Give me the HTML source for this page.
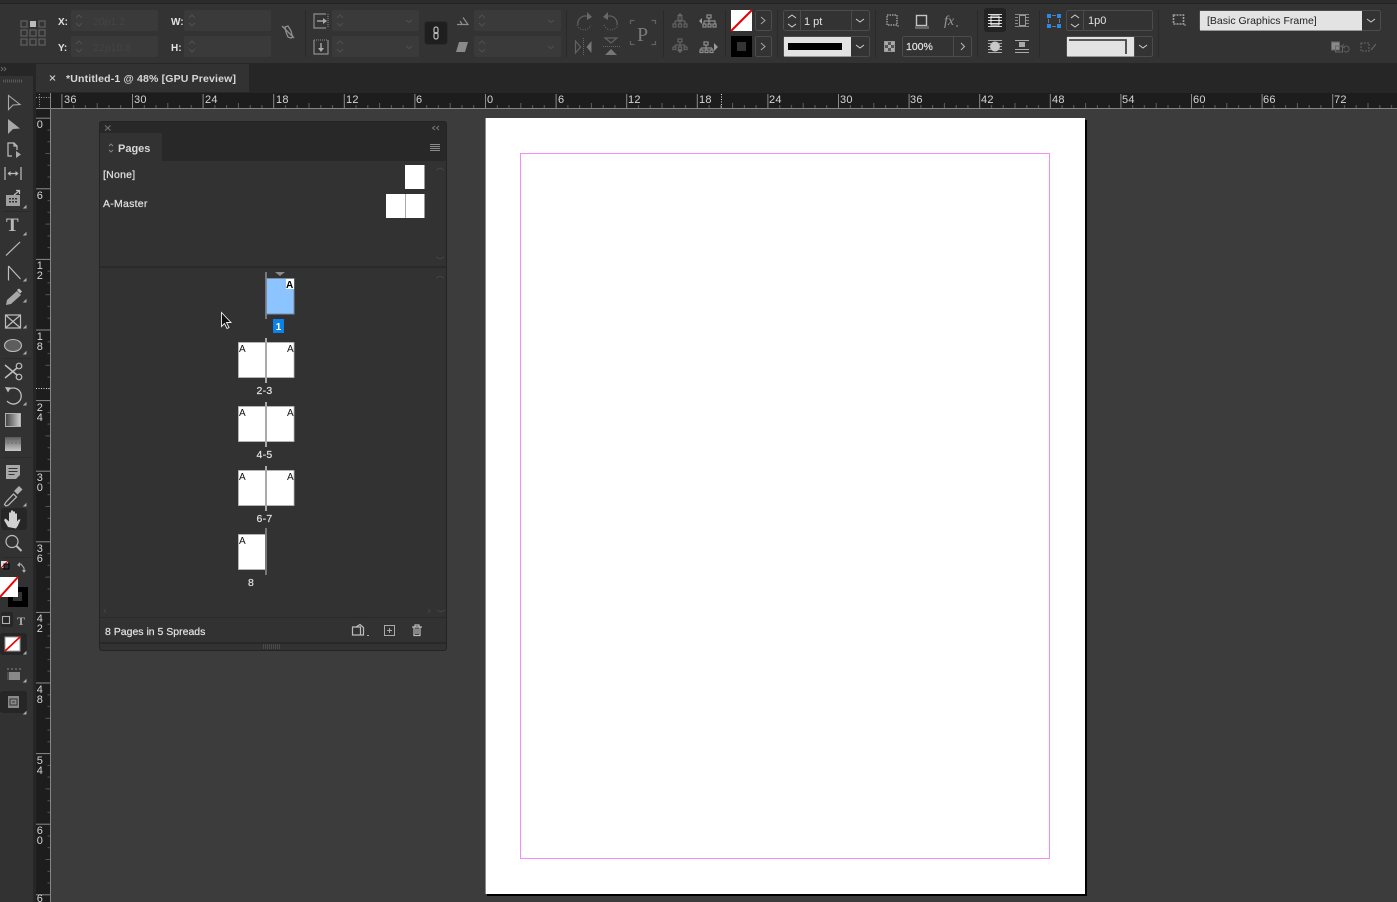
<!DOCTYPE html>
<html><head><meta charset="utf-8"><title>InDesign</title>
<style>
html,body{margin:0;padding:0;background:#3c3c3c;width:1397px;height:902px;overflow:hidden}
svg{position:absolute;left:0;top:0;display:block}
text{font-family:"Liberation Sans",sans-serif;font-size:10.5px;fill:#e2e2e2}
.r text,.r{font-size:11px;fill:#d4d4d4;letter-spacing:.3px}
.i{fill:none;stroke:#8e8e8e;stroke-width:1.2}
.d{fill:none;stroke:#626262;stroke-width:1.2}
.t{fill:none;stroke:#bdbdbd;stroke-width:1.2}
.f{fill:#3c3c3c}
.b{fill:#333;stroke:#4c4c4c}
.sep{stroke:#2a2a2a}
.lb{stroke:#e2e2e2;stroke-width:.2px;letter-spacing:.25px}
</style></head><body>
<svg width="1397" height="902" viewBox="0 0 1397 902" xmlns="http://www.w3.org/2000/svg">
<defs>
<pattern id="hr" patternUnits="userSpaceOnUse" x="485" y="93" width="70.6" height="16">
<path d="M.5 1V15" stroke="#8a8a8a"/>
<path d="M12.3 12V15M24 12V15M47.6 12V15M59.3 12V15M35.8 10V15" stroke="#5e5e5e"/>
</pattern>
<pattern id="vr" patternUnits="userSpaceOnUse" x="36" y="117.7" width="14" height="70.6">
<path d="M0 .5H14" stroke="#8a8a8a"/>
<path d="M11.500 12.3H14M11.500 24H14M11.500 47.6H14M11.500 59.3H14M9.500 35.8H14" stroke="#555"/>
</pattern>
<linearGradient id="gr" x1="1" x2="0"><stop offset="0" stop-color="#d0d0d0"/><stop offset="1" stop-color="#404040"/></linearGradient>
<linearGradient id="gv" x1="0" x2="0" y1="0" y2="1"><stop offset="0" stop-color="#5a5a5a"/><stop offset="1" stop-color="#c8c8c8"/></linearGradient>
</defs>

<!-- base areas -->
<rect width="1397" height="902" fill="#3c3c3c"/>
<rect width="1397" height="3" fill="#2c2c2c"/>
<rect y="3" width="1397" height="1" fill="#232323"/>
<rect y="4" width="1397" height="59" fill="#333"/>
<rect y="63" width="1397" height="30" fill="#262626"/>
<rect x="35" y="64" width="214" height="28" fill="#323232"/>
<text x="66" y="82" style="font-size:10.5px;font-weight:bold;fill:#d8d8d8;letter-spacing:.17px">*Untitled-1 @ 48% [GPU Preview]</text>
<path d="M50 75.500l5 5M55 75.500l-5 5" stroke="#d0d0d0" stroke-width="1.100"/>

<!-- horizontal ruler -->
<rect x="36" y="93" width="1361" height="15" fill="#1d1d1d"/>
<rect x="50.500" y="93" width="1347" height="16" fill="url(#hr)"/>
<rect x="36" y="108" width="1361" height="1" fill="#858585"/>
<g class="r">
<text x="64" y="103">36</text><text x="134" y="103">30</text><text x="205" y="103">24</text><text x="276" y="103">18</text><text x="346" y="103">12</text><text x="416" y="103">6</text><text x="487" y="103">0</text><text x="558" y="103">6</text><text x="628" y="103">12</text><text x="699" y="103">18</text><text x="769" y="103">24</text><text x="840" y="103">30</text><text x="910" y="103">36</text><text x="981" y="103">42</text><text x="1052" y="103">48</text><text x="1122" y="103">54</text><text x="1193" y="103">60</text><text x="1263" y="103">66</text><text x="1334" y="103">72</text>
</g>
<path d="M721.500 94V108" stroke="#ddd" stroke-dasharray="1 1.500"/>

<!-- vertical ruler -->
<rect x="36" y="109" width="14" height="793" fill="#1d1d1d"/>
<rect x="36" y="109" width="14" height="793" fill="url(#vr)"/>
<rect x="50" y="93" width="1" height="809" fill="#858585"/>
<path d="M36 97.500H50M39.500 94V107" stroke="#9a9a9a" stroke-dasharray="1 1.500"/>
<path d="M36 388.500H50" stroke="#ddd" stroke-dasharray="1 1.500"/>
<g class="r" text-anchor="middle">
<text x="40" y="128">0</text><text x="40" y="199">6</text>
<text x="40" y="269">1</text><text x="40" y="279">2</text>
<text x="40" y="340">1</text><text x="40" y="350">8</text>
<text x="40" y="411">2</text><text x="40" y="421">4</text>
<text x="40" y="481">3</text><text x="40" y="491">0</text>
<text x="40" y="552">3</text><text x="40" y="562">6</text>
<text x="40" y="622">4</text><text x="40" y="632">2</text>
<text x="40" y="693">4</text><text x="40" y="703">8</text>
<text x="40" y="764">5</text><text x="40" y="774">4</text>
<text x="40" y="834">6</text><text x="40" y="844">0</text>
<text x="40" y="902">6</text>
</g>

<!-- document page -->
<rect x="487" y="120" width="600" height="776" fill="#000"/>
<rect x="485" y="118" width="600" height="776" fill="#fff"/>
<rect x="485" y="118" width="1" height="776" fill="#8a8a8a"/>
<rect x="520.500" y="153.500" width="529" height="705" fill="none" stroke="#f58cf5"/>

<!-- tools panel -->
<rect x="0" y="63" width="33" height="839" fill="#323232"/>
<rect x="33" y="63" width="3" height="839" fill="#262626"/>
<rect x="0" y="63" width="33" height="13" fill="#262626"/>
<path d="M1 67l2 2-2 2M4 67l2 2-2 2" fill="none" stroke="#777" stroke-width=".8"/>
<path d="M3 81H22" stroke="#5a5a5a" stroke-width="3" stroke-dasharray="1 1"/>
<path d="M3 211.500H31M3 358.500H31M3 457.500H31M3 557.500H31" stroke="#2a2a2a"/>
<!-- selection -->
<path d="M8.500 95.500v14l4.500-4.500 7 -.5z" fill="none" stroke="#a8a8a8" stroke-width="1.100"/>
<path d="M8 119v15l5-5 7-.5z" fill="#a8a8a8"/>
<!-- page tool -->
<path class="t" d="M12 156H8V143h6l3 3v4M14 143v3h3"/><path d="M16 151l5 3.500-5 3.500z" fill="#aaa"/>
<!-- gap -->
<path class="t" d="M5 167v13M21 167v13M8 173.500H18"/><path d="M7.500 173.500l3-2.500v5zM18.500 173.500l-3-2.500v5z" fill="#bbb"/>
<!-- collector -->
<path d="M6 195h14v11H6z" fill="#a0a0a0"/><path d="M9 198h2v1.500H9zM12 198h2v1.500h-2zM15 198h2v1.500h-2zM9 201h2v1.500H9zM12 201h2v1.500h-2zM15 201h2v1.500h-2z" fill="#333"/><path class="t" d="M14 195l5-4M16 190.500h3.500V194"/>
<!-- T -->
<text x="6" y="231" style="font-family:'Liberation Serif',serif;font-size:19px;font-weight:bold;fill:#b8b8b8">T</text>
<path class="t" d="M6 255.500L20 242"/>
<path class="t" d="M8.500 266v14.500M8.500 266l12 13"/>
<path d="M6 305l1-5 10-9 4 4-10 9z" fill="#a8a8a8"/><path d="M17 290l2-1.500 3 3-2 2z" fill="#c0c0c0"/>
<path class="t" d="M5.500 315h15v13h-15zM5.500 315l15 13M20.500 315l-15 13"/>
<ellipse cx="13" cy="345.500" rx="8.500" ry="6" fill="#5d5d5d" stroke="#b8b8b8" stroke-width="1.100"/>
<!-- scissors -->
<path d="M5 365l12 10M5 378l12-10" fill="none" stroke="#bdbdbd" stroke-width="1.500"/><circle cx="19" cy="366" r="2.800" class="t"/><circle cx="19" cy="377" r="2.800" class="t"/>
<!-- rotate -->
<path d="M8 390a8 8 0 1 1 -1 11" fill="none" stroke="#bdbdbd" stroke-width="1.300" stroke-dasharray="11 0"/><path d="M5 387l6 .5-3 5z" fill="#bbb"/>
<rect x="5.500" y="413.500" width="15" height="13" fill="url(#gr)" stroke="#b0b0b0"/>
<rect x="5" y="437" width="16" height="14" fill="url(#gv)"/>
<path d="M5 440h2v2H5zM9 440h2v2H9zM13 440h2v2h-2zM17 440h2v2h-2zM7 442h2v2H7zM11 442h2v2h-2zM15 442h2v2h-2zM19 442h2v2h-2z" fill="#7a7a7a"/>
<!-- note -->
<path d="M6 465h14v10l-4 4H6z" fill="#a8a8a8"/><path d="M8.500 468.500h9M8.500 471.500h9M8.500 474.500h6" stroke="#333"/>
<!-- eyedropper -->
<path class="t" d="M6 502l-1.500 2.500 1.500 1.500 2.500-1 8-8-3-3z"/><path d="M14 491l5-5 3.500 3.500-5 5z" fill="#b0b0b0"/>
<!-- hand -->
<rect x="1" y="508" width="26" height="22" rx="3" fill="#262626"/>
<path d="M8 527l-4-7 1.500-1.500 3.500 3v-9h2v6-8h2v8-7h2v7-5h2v8l1.500-2h2l-2.500 6-2 3z" fill="#d0d0d0"/>
<!-- zoom -->
<circle cx="12" cy="541.500" r="6" class="t" stroke-width="1.400"/><path d="M16.500 546l5 5" stroke="#bdbdbd" stroke-width="2"/>
<!-- fill/stroke -->
<rect x="1" y="561" width="7" height="7" fill="#ddd"/><path d="M1 568l7-7" stroke="#e00"/><rect x="4" y="564" width="5" height="5" fill="#333" stroke="#000"/>
<path d="M18 565l3-1 3 4v3" fill="none" stroke="#aaa" stroke-width="1.100"/><path d="M17 565l3-3v5zM22 570h4l-2 3z" fill="#aaa"/>
<rect x="8" y="587" width="20" height="20" fill="#000"/><rect x="13" y="592" width="9" height="9" fill="#333"/>
<rect x="0" y="577" width="18" height="20" fill="#fff"/><path d="M0 597L18 577" stroke="#e00" stroke-width="2"/>
<rect x="1" y="612" width="12" height="15" rx="2" fill="#262626"/><rect x="2.500" y="616.500" width="7" height="7" fill="none" stroke="#b0b0b0" stroke-width="1.100"/>
<text x="17" y="625" style="font-family:'Liberation Serif',serif;font-size:12px;font-weight:bold;fill:#aaa">T</text>
<rect x="0" y="633" width="27" height="22" rx="3" fill="#262626"/>
<rect x="5" y="637" width="15" height="14" fill="#fff" stroke="#999"/><path d="M5 651L20 637" stroke="#e00" stroke-width="1.600"/>
<path d="M9 672h11v8H9z" fill="#888"/><path d="M8 668v2M12 668v2M16 668v2M20 668v2" stroke="#888"/><path d="M8 672v8" stroke="#666"/>
<rect x="0" y="691" width="27" height="22" rx="3" fill="#262626"/>
<rect x="8" y="696" width="11" height="12" fill="#8a8a8a"/><path d="M10 699h7v6h-7zM12 702h3" fill="none" stroke="#333"/>
<path d="M26 652v2h-2zM26 712v2h-2zM26 680v2h-2zM26 504v2h-2zM26 300v2h-2zM26 326v2h-2zM26 352v2h-2zM26 233v2h-2zM26 279v2h-2zM26 206v2h-2zM26 403v2h-2z" fill="#aaa" stroke="#aaa"/>

<!-- control bar -->
<g fill="none" stroke="#626262" stroke-width="1.200">
<rect x="21" y="21" width="6" height="6"/><rect x="39" y="21" width="6" height="6"/>
<rect x="21" y="30" width="6" height="6"/><rect x="30" y="30" width="6" height="6"/><rect x="39" y="30" width="6" height="6"/>
<rect x="21" y="39" width="6" height="6"/><rect x="30" y="39" width="6" height="6"/><rect x="39" y="39" width="6" height="6"/>
</g>
<rect x="30" y="21" width="6" height="6" fill="#bcbcbc"/>
<text x="58" y="25" style="font-weight:bold;font-size:10px">X:</text>
<text x="58" y="51" style="font-weight:bold;font-size:10px">Y:</text>
<text x="171" y="25" style="font-weight:bold;font-size:10px">W:</text>
<text x="171" y="51" style="font-weight:bold;font-size:10px">H:</text>
<g fill="#3a3a3a">
<rect x="71" y="10" width="87" height="21" rx="2"/><rect x="71" y="36" width="87" height="21" rx="2"/>
<rect x="184" y="10" width="87" height="21" rx="2"/><rect x="184" y="36" width="87" height="21" rx="2"/>
<rect x="332" y="10" width="87" height="21" rx="2"/><rect x="332" y="36" width="87" height="21" rx="2"/>
<rect x="474" y="10" width="87" height="21" rx="2"/><rect x="474" y="36" width="87" height="21" rx="2"/>
</g>
<text x="93" y="25" style="font-size:10.500px;fill:#444">20p1.2</text>
<text x="93" y="51" style="font-size:10.500px;fill:#444">22p10.8</text>
<path d="M76 18l3-3 3 3M76 23l3 3 3-3M76 44l3-3 3 3M76 49l3 3 3-3M189 18l3-3 3 3M189 23l3 3 3-3M189 44l3-3 3 3M189 49l3 3 3-3M337 18l3-3 3 3M337 23l3 3 3-3M337 44l3-3 3 3M337 49l3 3 3-3M479 18l3-3 3 3M479 23l3 3 3-3M479 44l3-3 3 3M479 49l3 3 3-3" fill="none" stroke="#505050"/>
<path d="M406 20l3 2.500 3-2.500M406 46l3 2.500 3-2.500M548 20l3 2.500 3-2.500M548 46l3 2.500 3-2.500" fill="none" stroke="#505050"/>
<!-- link off -->
<path d="M285 27l3-1 3 5 1 4 1 2-2 1-3-1-2-5z" fill="none" stroke="#8e8e8e" stroke-width="1.300"/><path d="M282 26l12 12" stroke="#8e8e8e" stroke-width="1.300"/>
<path class="sep" d="M305.500 10V57M566.500 10V57M663.500 10V57M725.500 10V57M777.500 10V57M875.500 10V57M977.500 10V57M1039.500 10V57M1158.500 10V57"/>
<!-- scale icons -->
<path class="i" d="M326 14h-12v14h12"/><path d="M328 14v14" stroke="#8e8e8e" stroke-dasharray="1 1"/><path d="M317 21h7" stroke="#aaa" stroke-width="1.400"/><path d="M323 18l4 3-4 3z" fill="#aaa"/>
<path class="i" d="M314 40v14h14V40"/><path d="M314 40h14" stroke="#8e8e8e" stroke-dasharray="1 1"/><path d="M321 43v6" stroke="#aaa" stroke-width="1.400"/><path d="M318 48h6l-3 4z" fill="#aaa"/>
<rect x="424.500" y="21.500" width="23" height="23" rx="3" fill="#1f1f1f" stroke="#2c2c2c"/>
<rect x="434" y="27" width="4" height="6.500" rx="2" fill="none" stroke="#bbb" stroke-width="1.200"/><rect x="434" y="32.500" width="4" height="6.500" rx="2" fill="none" stroke="#bbb" stroke-width="1.200"/>
<path class="i" d="M457 24.500h11l-5-7M460 21l2 3"/>
<path d="M459 42h9l-3 10h-9z" fill="#8a8a8a"/>
<!-- rotate/flip -->
<path class="d" d="M578 25a7.500 7.500 0 0 1 10-8.500" stroke-width="1.600"/><path d="M587 12v8l5-3z" fill="#686868"/><path d="M577 25a7.500 7.500 0 0 0 14 0" class="d" stroke-dasharray="1 1.500"/>
<path class="d" d="M617 25a7.500 7.500 0 0 0-10-8.500" stroke-width="1.600"/><path d="M608 12v8l-5-3z" fill="#686868"/><path d="M604 25a7.500 7.500 0 0 0 14 0" class="d" stroke-dasharray="1 1.500"/>
<path class="d" d="M575.500 41v12l5-6z"/><path d="M591.500 41v12l-5-6z" fill="#777"/><path d="M583.500 38v18" stroke="#666" stroke-dasharray="1 1"/>
<path class="d" d="M605 38h12l-6 5z"/><path d="M605 55h12l-6-6z" fill="#777"/><path d="M603 46.500h17" stroke="#666" stroke-dasharray="1 1"/>
<text x="637" y="41" style="font-family:'Liberation Serif',serif;font-size:20px;fill:#7b7b7b">P</text>
<path class="d" d="M630.500 24v-3.500h4M651.500 20.500h4V24M630.500 41v3.500h4M651.500 44.500h4V41" stroke-width="1.400"/>
<!-- hierarchy -->
<path d="M677 16l3-3 3 3z" fill="#686868"/><path class="d" d="M680 20v1M675 21v3M685 21v3M680 21v3M675 21h10"/><rect x="678" y="17" width="4" height="3" class="d"/><rect x="673" y="24" width="3" height="3" class="d"/><rect x="678.500" y="24" width="3" height="3" class="d"/><rect x="684" y="24" width="3" height="3" class="d"/>
<path d="M699 21l3-3v6z" fill="#9a9a9a"/><path class="i" d="M709 18v3M704 21h11v3M704 21v3M709 21v3"/><rect x="707" y="15" width="4" height="3" class="i"/><rect x="703" y="24" width="3" height="3" class="i"/><rect x="708" y="24" width="3" height="3" class="i"/><rect x="713" y="24" width="3" height="3" class="i"/>
<path d="M677 50l3 3 3-3z" fill="#686868"/><path class="d" d="M680 42v3M675 45h10M675 45v2M685 45v2M680 45v2"/><rect x="678" y="39" width="4" height="3" class="d"/><rect x="673" y="47" width="3" height="2.500" class="d"/><rect x="678.500" y="47" width="3" height="2.500" class="d"/><rect x="684" y="47" width="3" height="2.500" class="d"/>
<path d="M714 43v8l4-4z" fill="#9a9a9a"/><path class="i" d="M706 45v3M701 48h11M701 48v2M706 48v2M712 48v2"/><rect x="704" y="42" width="4" height="3" class="i"/><rect x="700" y="50" width="3" height="2.500" class="i"/><rect x="705" y="50" width="3" height="2.500" class="i"/><rect x="710" y="50" width="3" height="2.500" class="i"/>
<!-- swatches -->
<rect x="731" y="10" width="21" height="21" fill="#fff"/><path d="M731 31L752 10" stroke="#e80000" stroke-width="2"/>
<rect x="731" y="36" width="21" height="21" fill="#000"/><rect x="737" y="42" width="9" height="9" fill="#333"/>
<rect x="755.500" y="10.500" width="16" height="20" rx="2" class="b"/><rect x="755.500" y="36.500" width="16" height="20" rx="2" class="b"/>
<path d="M761 17l4 3.500-4 3.500M761 43l4 3.500-4 3.500" fill="none" stroke="#a8a8a8"/>
<!-- stroke -->
<rect x="783.500" y="10.500" width="86" height="20" rx="2" class="b"/><path d="M800.500 11V30M851.500 11V30" stroke="#4c4c4c"/>
<path d="M788 18l4-3 4 3M788 24l4 3 4-3" fill="none" stroke="#cfcfcf"/>
<text x="804" y="25" style="font-size:11px">1 pt</text>
<path d="M856 19l4 3 4-3" fill="none" stroke="#cfcfcf"/>
<rect x="783.500" y="36.500" width="86" height="20" rx="2" class="b"/><rect x="784" y="37" width="67" height="19.500" fill="#e3e3e3"/>
<rect x="788" y="43" width="54" height="7" fill="#000"/>
<path d="M856 45l4 3 4-3" fill="none" stroke="#cfcfcf"/>
<!-- corner, shadow, fx -->
<rect x="887" y="15" width="10" height="10" fill="none" stroke="#b4b4b4" stroke-width="1.200" stroke-dasharray="1.500 1"/>
<path d="M897 26h2" stroke="#999"/>
<rect x="916.500" y="15.500" width="10" height="10" fill="none" stroke="#c4c4c4" stroke-width="1.400"/><rect x="915" y="26" width="14" height="3" fill="#666"/>
<text x="944" y="25" style="font-family:'Liberation Serif',serif;font-style:italic;font-size:14px;fill:#999">fx</text><path d="M956 26h2" stroke="#999"/>
<rect x="884.500" y="41.500" width="10" height="10" fill="#555" stroke="#999"/><path d="M885 42h3v3h-3zM891 42h3v3h-3zM888 45h3v3h-3zM885 48h3v3h-3zM891 48h3v3h-3z" fill="#aaa"/>
<rect x="902.500" y="36.500" width="69" height="20" rx="2" class="b"/><path d="M953.500 37V56" stroke="#4c4c4c"/>
<text x="906" y="50" style="font-size:10.500px;fill:#e2e2e2;stroke:#e2e2e2;stroke-width:.2px">100%</text>
<path d="M961 43l3.500 3.500-3.500 3.500" fill="none" stroke="#b8b8b8"/>
<!-- text wrap -->
<rect x="984" y="8" width="22" height="24" rx="3" fill="#232323"/>
<path d="M988 14.500h14M988 17.500h14M988 20.500h14M988 23.500h14M988 26.500h14" stroke="#ddd"/><rect x="991" y="16" width="8" height="9" fill="none" stroke="#eee"/>
<path d="M1015 14.500h14M1015 26.500h14M1015 17.500h3M1015 20.500h3M1015 23.500h3M1026 17.500h3M1026 20.500h3M1026 23.500h3" stroke="#888"/><rect x="1019.500" y="15.500" width="6" height="10" fill="none" stroke="#999"/>
<path d="M988 40.500h14M988 52.500h14M988 43.500h3M988 49.500h3M999 43.500h3M999 49.500h3M988 46.500h2M1000 46.500h2" stroke="#aaa"/><circle cx="995" cy="46.500" r="5" fill="#c8c8c8"/>
<path d="M1015 40.500h14M1015 52.500h14M1015 49.500h14" stroke="#aaa"/><rect x="1019" y="42" width="6" height="5" fill="#aaa"/>
<!-- blue corners / inset -->
<rect x="1047" y="14" width="4" height="4" fill="#2a8ae8"/><rect x="1057" y="14" width="4" height="4" fill="#2a8ae8"/><rect x="1047" y="24" width="4" height="4" fill="#2a8ae8"/><rect x="1057" y="24" width="4" height="4" fill="#2a8ae8"/>
<path d="M1052 15.500h4M1052 26.500h4M1048.500 19v4M1059.500 19v4" stroke="#777"/>
<rect x="1066.500" y="10.500" width="86" height="20" rx="2" class="b"/><path d="M1083.500 11V30" stroke="#4c4c4c"/>
<path d="M1071 18l4-3 4 3M1071 24l4 3 4-3" fill="none" stroke="#cfcfcf"/>
<text x="1088" y="24" style="font-size:11px">1p0</text>
<rect x="1066.500" y="36.500" width="86" height="20" rx="2" class="b"/><rect x="1067" y="37" width="67" height="19.500" fill="#e3e3e3"/><path d="M1134.500 37V56" stroke="#4c4c4c"/>
<path d="M1069 40h57v14" fill="none" stroke="#444" stroke-width="1.800"/>
<path d="M1139 45l4 3 4-3" fill="none" stroke="#cfcfcf"/>
<!-- object style -->
<rect x="1173.500" y="15" width="10" height="9" fill="none" stroke="#a0a0a0" stroke-width="1.600" stroke-dasharray="2 1"/><path d="M1184 25h2" stroke="#999"/>
<rect x="1199.500" y="10.500" width="181" height="20" rx="2" class="b"/><rect x="1200" y="11" width="162" height="19.500" fill="#e3e3e3"/>
<text x="1207" y="24" style="fill:#222;font-size:10.500px">[Basic Graphics Frame]</text>
<path d="M1367 19l4 3 4-3" fill="none" stroke="#cfcfcf"/>
<rect x="1331.500" y="42" width="8" height="8" fill="#8a8a8a" stroke="#666"/><rect x="1335.500" y="46" width="7" height="6" fill="none" stroke="#666"/><path d="M1344 47a3 3 0 1 1 0 4M1344 44l-2 3 3 1" fill="none" stroke="#5e5e5e"/>
<rect x="1361" y="43" width="8" height="8" fill="none" stroke="#666" stroke-dasharray="2 1"/><path d="M1371 50l5-6" stroke="#666"/>

<!-- pages panel -->
<rect x="99" y="121" width="348" height="530" rx="3" fill="#323232"/>
<rect x="99" y="121" width="348" height="40" rx="3" fill="#282828"/>
<rect x="100" y="133" width="62" height="28" fill="#323232"/>
<rect x="99.500" y="121.500" width="347" height="529" rx="3" fill="none" stroke="#242424"/>
<path d="M105 125.500l5.500 5M110.500 125.500l-5.500 5" stroke="#777"/>
<path d="M435 126l-2.500 2 2.500 2M439 126l-2.500 2 2.500 2" fill="none" stroke="#777"/>
<path d="M109 146l2-2 2 2M109 150l2 2 2-2" fill="none" stroke="#8a8a8a" stroke-width=".9"/>
<text x="118" y="152" style="font-weight:bold;font-size:11px;fill:#d8d8d8">Pages</text>
<path d="M430 144.500h10M430 146.500h10M430 148.500h10M430 150.500h10" stroke="#8a8a8a"/>
<text class="lb" x="103" y="178">[None]</text>
<text class="lb" x="103" y="207">A-Master</text>
<rect x="405" y="165" width="19.500" height="24" fill="#fff"/>
<rect x="386" y="194" width="38.500" height="24" fill="#fff"/><rect x="405" y="194" width="1" height="24" fill="#aaa"/>
<rect x="100" y="266" width="346" height="2" fill="#2a2a2a"/>
<path d="M436 170l4-2 4 2M436 257l4 2 4-2M436 278l4-2 4 2" fill="none" stroke="#444"/>

<!-- page 1 -->
<rect x="265" y="272" width="2" height="47" fill="#777"/>
<path d="M275 272h10l-5 4z" fill="#8a8a8a"/>
<rect x="266.500" y="278.500" width="27.500" height="35.500" fill="#8cc4ff" stroke="#7c8b9e"/>
<rect x="286" y="279" width="8" height="10" fill="#fff"/>
<text x="286" y="288" style="font-size:10px;font-weight:bold;fill:#000">A</text>
<rect x="273" y="319" width="11" height="14" fill="#0a82e8"/>
<text x="278.500" y="330" text-anchor="middle" style="font-size:10px;font-weight:bold;fill:#fff">1</text>
<!-- spreads -->
<g>
<rect x="238.500" y="342.500" width="55.500" height="35" fill="#fff" stroke="#bbb" stroke-width=".8"/><rect x="265" y="338" width="2" height="45" fill="#aaa"/>
<text x="239" y="352" style="font-size:10px;fill:#111">A</text><text x="287" y="352" style="font-size:10px;fill:#111">A</text>
<text class="lb" x="264.500" y="394" text-anchor="middle">2-3</text>
<rect x="238.500" y="406.500" width="55.500" height="35" fill="#fff" stroke="#bbb" stroke-width=".8"/><rect x="265" y="402" width="2" height="45" fill="#aaa"/>
<text x="239" y="416" style="font-size:10px;fill:#111">A</text><text x="287" y="416" style="font-size:10px;fill:#111">A</text>
<text class="lb" x="264.500" y="458" text-anchor="middle">4-5</text>
<rect x="238.500" y="470.500" width="55.500" height="35" fill="#fff" stroke="#bbb" stroke-width=".8"/><rect x="265" y="466" width="2" height="45" fill="#aaa"/>
<text x="239" y="480" style="font-size:10px;fill:#111">A</text><text x="287" y="480" style="font-size:10px;fill:#111">A</text>
<text class="lb" x="264.500" y="522" text-anchor="middle">6-7</text>
<rect x="238.500" y="534.500" width="27.500" height="35" fill="#fff" stroke="#bbb" stroke-width=".8"/><rect x="265" y="528" width="2" height="47" fill="#777"/>
<text x="239" y="544" style="font-size:10px;fill:#111">A</text>
<text class="lb" x="251" y="586" text-anchor="middle">8</text>
</g>
<!-- cursor -->
<path d="M221.500 312.500v14l3-3 2.500 5 2-1-2.500-5h4.500z" fill="#111" stroke="#eee" stroke-width=".9"/>
<!-- footer -->
<path d="M106 609l-2 2 2 2M428 609l2 2-2 2M437 610l4 2 4-2" fill="none" stroke="#444"/>
<rect x="100" y="617" width="346" height="1" fill="#2a2a2a"/>
<text class="lb" style="letter-spacing:0" x="105" y="635">8 Pages in 5 Spreads</text>
<rect x="100" y="642" width="346" height="2" fill="#282828"/>
<path d="M263 645.500h18M263 647.500h18" stroke="#4a4a4a" stroke-width="3" stroke-dasharray="1 1"/>
<path class="t" d="M352.500 627h8v8h-8zM356 627l4-2.500 3.500 3v7.500h-3"/><path d="M367 635.500h2" stroke="#aaa"/>
<rect x="384.500" y="625.500" width="10" height="10" fill="none" stroke="#aaa"/><path d="M387 630.500h5M389.500 628v5" stroke="#aaa"/>
<path class="t" d="M412 627h10M414 627v8.500h6V627M416 628.500v5.500M418 628.500v5.500M415 627v-2h4v2"/>
</svg>
</body></html>
